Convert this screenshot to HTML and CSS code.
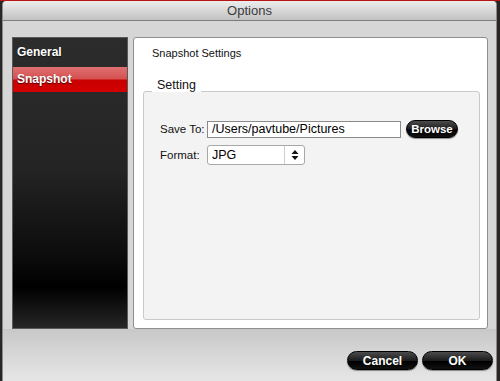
FILE: index.html
```html
<!DOCTYPE html>
<html lang="en">
<head>
  <meta charset="UTF-8">
  <title>Options</title>
  <link rel="stylesheet" href="styles.css">
</head>
<body>
  <div class="window">
    <div class="titlebar">Options</div>

    <div class="content">
      <div class="sidebar">
        <div class="nav-item">General</div>
        <div class="nav-item active">Snapshot</div>
      </div>

      <div class="panel">
        <div class="panel-title">Snapshot Settings</div>
        <div class="group-label">Setting</div>
        <div class="group">
          <div class="form-row">
            <label class="field-label">Save To:</label>
            <input class="path-input" type="text" value="/Users/pavtube/Pictures">
            <button class="pill small">Browse</button>
          </div>
          <div class="form-row">
            <label class="field-label">Format:</label>
            <div class="select">
              <span class="select-value">JPG</span>
              <span class="select-arrows">
                <svg width="8" height="12" viewBox="0 0 8 12">
                  <path d="M4 1 L7.5 5 L0.5 5 Z" fill="#111"/>
                  <path d="M4 11 L7.5 7 L0.5 7 Z" fill="#111"/>
                </svg>
              </span>
            </div>
          </div>
        </div>
      </div>
    </div>

    <div class="footer">
      <button class="pill">Cancel</button>
      <button class="pill">OK</button>
    </div>
  </div>
</body>
</html>
```

FILE: styles.css
```css
* {
  box-sizing: border-box;
}

body {
  margin: 0;
  height: 381px;
  overflow: hidden;
  background: #2a2626;
  border-top: 1px solid #b81414;
  font-family: "Liberation Sans", Arial, sans-serif;
}

.window {
  margin-left: 2px;
  width: 495px;
  height: 380px;
  background: #d6d6d6;
  border-left: 1px solid #8a8a8a;
  border-right: 1px solid #8a8a8a;
  border-radius: 4px 4px 0 0;
  display: flex;
  flex-direction: column;
}

.titlebar {
  height: 20px;
  line-height: 19px;
  text-align: center;
  font-size: 13px;
  color: #3a3a3a;
  background: linear-gradient(#ededed, #c2c2c2);
  border-bottom: 1px solid #7c7c7c;
  border-radius: 4px 4px 0 0;
}

.content {
  display: flex;
  gap: 5px;
  height: 308px;
  padding: 16px 8px 0 9px;
}

.sidebar {
  width: 116px;
  border: 1px solid #5a5a5a;
  background: linear-gradient(#2c2c2c 0%, #242424 45%, #0c0c0c 75%, #000 86%, #262626 100%);
  padding-top: 2px;
  display: flex;
  flex-direction: column;
  gap: 2px;
}

.nav-item {
  height: 25px;
  line-height: 25px;
  padding-left: 4px;
  color: #fff;
  font-size: 12px;
  font-weight: bold;
  text-shadow: 0 1px 1px rgba(0, 0, 0, 0.6);
}

.nav-item.active {
  background: linear-gradient(#e07070 0%, #d45050 48%, #c80000 52%, #d40000 100%);
}

.panel {
  flex: 1;
  background: #fff;
  border: 1px solid #8e8e8e;
  border-radius: 3px;
  padding: 8px 7px 8px 9px;
  display: flex;
  flex-direction: column;
}

.panel-title {
  font-size: 11px;
  line-height: 14px;
  color: #111;
  padding-left: 9px;
  margin-bottom: 18px;
}

.group-label {
  align-self: flex-start;
  margin-left: 9px;
  margin-bottom: -1px;
  padding: 0 5px;
  background: #fff;
  font-size: 12.5px;
  line-height: 14px;
  color: #111;
  position: relative;
}

.group {
  flex: 1;
  background: #f3f3f3;
  border: 1px solid #c9c9c9;
  border-radius: 3px;
  padding: 28px 0 0 16px;
  display: flex;
  flex-direction: column;
  gap: 7px;
}

.form-row {
  display: flex;
  align-items: center;
}

.field-label {
  width: 47px;
  font-size: 11.5px;
  color: #111;
}

.path-input {
  width: 194px;
  height: 17px;
  border: 1px solid #8a8a8a;
  background: #fff;
  padding: 0 4px;
  font-family: inherit;
  font-size: 12.5px;
  color: #000;
  margin: 0;
}

.pill {
  height: 19px;
  min-width: 71px;
  border: 1px solid #000;
  border-radius: 10px;
  background: linear-gradient(#4c4c4c 0%, #1c1c1c 50%, #000 55%, #111 100%);
  color: #fff;
  font-family: inherit;
  font-size: 12px;
  font-weight: bold;
  padding: 0 8px;
  box-shadow: 0 1px 1px rgba(0, 0, 0, 0.4);
}

.pill.small {
  min-width: 52px;
  height: 18px;
  margin-left: 5px;
  font-size: 11.5px;
  padding: 0 4px;
}

.select {
  width: 98px;
  height: 20px;
  border: 1px solid #a8a8a8;
  border-radius: 3px;
  background: #fff;
  display: flex;
  align-items: center;
}

.select-value {
  flex: 1;
  padding-left: 4px;
  font-size: 12.5px;
  color: #000;
}

.select-arrows {
  width: 20px;
  height: 18px;
  border-left: 1px solid #cfcfcf;
  display: flex;
  align-items: center;
  justify-content: center;
}

.footer {
  flex: 1;
  display: flex;
  justify-content: flex-end;
  align-items: flex-start;
  gap: 4px;
  padding: 22px 3px 0 0;
  background: linear-gradient(#c8c8c8, #e6e6e6);
}
```
